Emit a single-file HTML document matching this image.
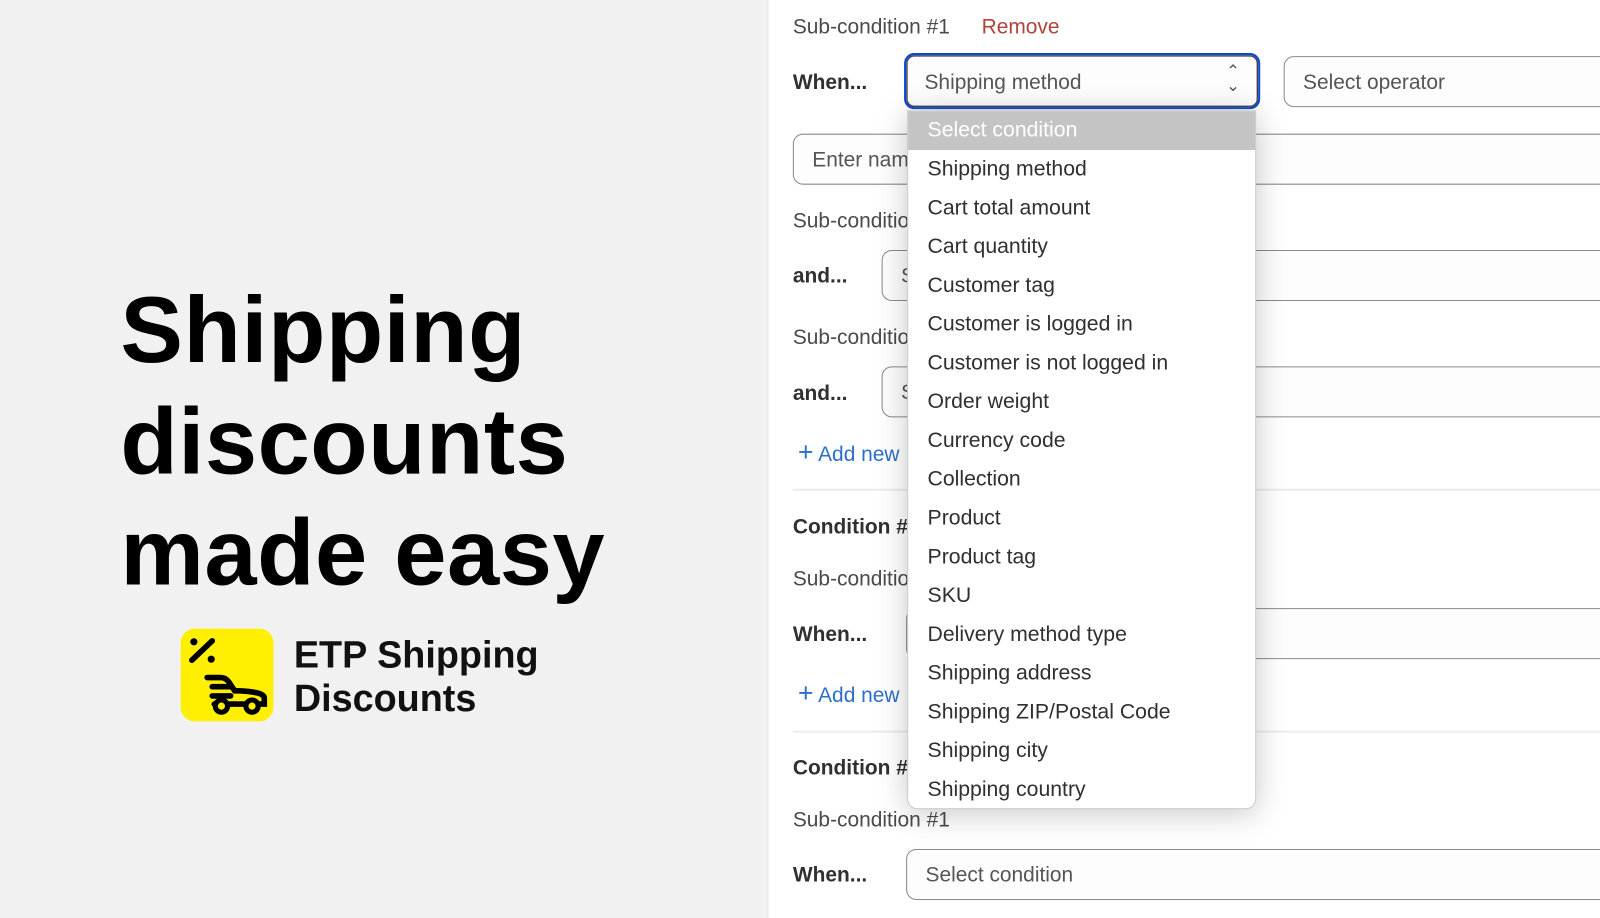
<!DOCTYPE html>
<html><head><meta charset="utf-8"><style>
*{margin:0;padding:0;box-sizing:border-box}
body{width:1600px;height:900px;overflow:hidden;background:#f1f1f1;font-family:"Liberation Sans",sans-serif;position:relative}
#w{position:absolute;left:0;top:0;width:1568px;height:882px;transform:scale(1.0204);transform-origin:0 0}
.a{position:absolute;white-space:nowrap}
h1{position:absolute;left:118px;top:270px;font-size:92px;line-height:109px;font-weight:bold;color:#000;letter-spacing:0.5px}
.panel{position:absolute;left:752px;top:0;width:848px;height:900px;background:#fff;border-left:1px solid #e0e0e0}
.t{font-size:20.5px;color:#4a4a4a}
.b{font-size:20.5px;color:#303030;font-weight:bold}
.box{position:absolute;border:1.5px solid #8a8a8a;border-radius:10px;background:#fdfdfd;height:50px;font-size:20.5px;color:#555;padding:13px 18px}
.sep{position:absolute;left:777px;right:-40px;height:2px;background:#ececec}
.blue{font-size:20.5px;color:#2c6ecb}
.dd{position:absolute;left:889px;top:108px;width:342px;height:685px;background:#fff;border-radius:0 0 10px 10px;box-shadow:0 4px 30px rgba(0,0,0,.22);border:1px solid #ccc}
.dd div{height:38px;line-height:38px;padding-left:19px;font-size:20.8px;color:#303030}
</style></head><body><div id="w">
<h1>Shipping<br>discounts<br>made easy</h1>
<svg class="a" style="left:177px;top:616px" width="91" height="91" viewBox="0 0 91 91">
<rect width="91" height="91" rx="14" fill="#ffef00"/>
<g stroke="#000" stroke-width="5.5" stroke-linecap="round" fill="none">
<line x1="11" y1="31" x2="31" y2="12"/>
<path d="M26 48 H39 Q44 48 47 52 L53 61 H57 Q82 62 82 68 V74 H33"/>
<line x1="31" y1="57" x2="49" y2="57"/>
<line x1="31" y1="66" x2="49" y2="66"/>
</g>
<circle cx="13" cy="13" r="3.5" fill="#000"/><circle cx="30" cy="30" r="3.5" fill="#000"/>
<circle cx="40" cy="76" r="6" fill="#ffef00" stroke="#000" stroke-width="5"/>
<circle cx="70" cy="76" r="6" fill="#ffef00" stroke="#000" stroke-width="5"/>
</svg>
<div class="a" style="left:288px;top:620px;font-size:37px;line-height:43px;font-weight:bold;color:#111">ETP Shipping<br>Discounts</div>

<div class="panel"></div>
<div class="a t" style="left:777px;top:15px">Sub-condition #1</div>
<div class="a" style="left:962px;top:15px;font-size:20.5px;color:#b0433a">Remove</div>
<div class="a b" style="left:777px;top:69px">When...</div>
<div class="box" style="left:886px;top:52px;width:349px;height:55px;border:2.5px solid #0b47d8;box-shadow:inset 0 0 0 1.5px #444;padding:15px 18px">Shipping method<span style="position:absolute;right:18px;top:10px;font-size:16px;line-height:14px;color:#555">⌃<br>⌄</span></div>
<div class="box" style="left:1258px;top:55px;width:360px">Select operator</div>
<div class="box" style="left:777px;top:131px;width:840px">Enter name</div>
<div class="a t" style="left:777px;top:205px">Sub-condition #2</div>
<div class="a b" style="left:777px;top:259px">and...</div>
<div class="box" style="left:864px;top:245px;width:760px">Select</div>
<div class="a t" style="left:777px;top:319px">Sub-condition #3</div>
<div class="a b" style="left:777px;top:374px">and...</div>
<div class="box" style="left:864px;top:359px;width:760px">Select</div>
<div class="a blue" style="left:782px;top:433px"><span style="font-size:26px;line-height:20px">+</span> Add new</div>
<div class="sep" style="top:479px"></div>
<div class="a b" style="left:777px;top:505px">Condition #2</div>
<div class="a t" style="left:777px;top:556px">Sub-condition #1</div>
<div class="a b" style="left:777px;top:610px">When...</div>
<div class="box" style="left:888px;top:596px;width:740px">Select</div>
<div class="a blue" style="left:782px;top:669px"><span style="font-size:26px;line-height:20px">+</span> Add new</div>
<div class="sep" style="top:716px"></div>
<div class="a b" style="left:777px;top:741px">Condition #3</div>
<div class="a t" style="left:777px;top:792px">Sub-condition #1</div>
<div class="a b" style="left:777px;top:846px">When...</div>
<div class="box" style="left:888px;top:832px;width:740px">Select condition</div>

<div class="dd">
<div style="background:#c4c4c4;color:#fff">Select condition</div>
<div>Shipping method</div><div>Cart total amount</div><div>Cart quantity</div><div>Customer tag</div><div>Customer is logged in</div><div>Customer is not logged in</div><div>Order weight</div><div>Currency code</div><div>Collection</div><div>Product</div><div>Product tag</div><div>SKU</div><div>Delivery method type</div><div>Shipping address</div><div>Shipping ZIP/Postal Code</div><div>Shipping city</div><div>Shipping country</div>
</div>
</div></body></html>
